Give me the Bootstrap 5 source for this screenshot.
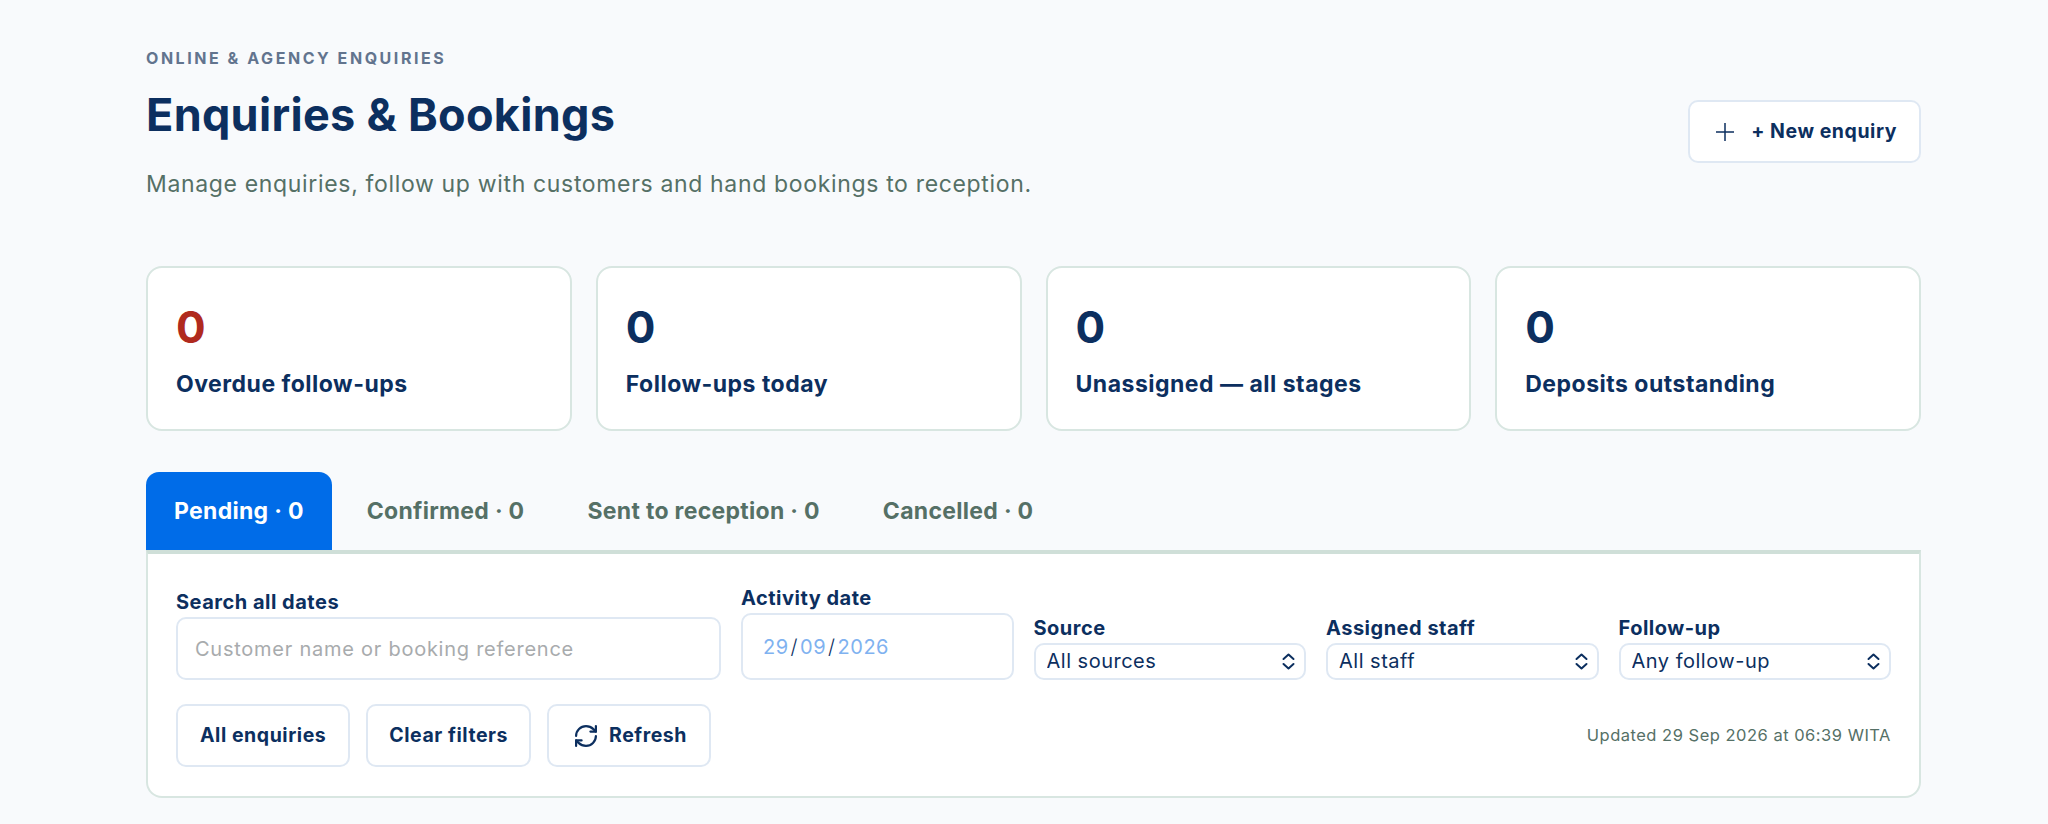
<!doctype html>
<html lang="en">
<head>
<meta charset="utf-8">
<title>Enquiries &amp; Bookings</title>
<link href="https://cdn.jsdelivr.net/npm/bootstrap@5.3.0/dist/css/bootstrap.min.css" rel="stylesheet">
<style>
body{background:#f8fafc;font-family:Inter,"Liberation Sans",sans-serif;color:#0c2f5f}
.shell{padding:47px 127px 27px 146px}
.eyebrow{font-size:16px;font-weight:700;letter-spacing:2.55px;color:#62748e;line-height:22px;margin-bottom:18px}
.page-title{font-size:45px;font-weight:700;line-height:56px;color:#0c2f5f;margin:0 0 25px;letter-spacing:.3px}
.page-sub{font-size:23px;color:#557066;line-height:32px;margin:0;letter-spacing:.66px}
.head-row{margin-bottom:66px}
.btn-soft{background:#fff;border:2px solid #dfe8f3;border-radius:10px;color:#0c2f5f;font-weight:700;font-size:19.5px;height:63px;display:inline-flex;align-items:center;padding:0 22px;letter-spacing:.55px}
.btn-soft:hover{background:#fff;color:#0c2f5f;border-color:#dfe8f3}
.btn-new{margin-top:53px;padding:0 22px 0 26px;gap:17px}
.btn-clear{padding:0 21px}
.btn-refresh{padding:0 22px 0 26px;gap:12px}
.stat{border:2px solid #d8e6e1;border-radius:16px;background:#fff;height:165px;padding:26px 28px}
.stat-num{font-size:44px;font-weight:700;line-height:66px;color:#0c2f5f}
.stat-num.alert-num{color:#b02a1e}
.stat-lab{font-size:23px;font-weight:700;line-height:32px;margin-top:8px;letter-spacing:.5px}
.tabbar{margin-top:41px;gap:7px}
.tabbar .nav-link{font-size:23px;font-weight:700;height:78px;padding:0 28px;display:flex;align-items:center;color:#557066;border-radius:13px 13px 0 0;letter-spacing:.3px}
.tabbar .nav-link.active{background:#006ce8;color:#fff}
.panel{background:#fff;border:2px solid #d8e6e1;border-top:4px solid #cfdfd8;border-radius:0 0 16px 16px;padding:31px 28px 29px}
.filters{display:grid;grid-template-columns:2fr 1fr 1fr 1fr 1fr;column-gap:20px;align-items:end}
.f-lab{font-size:20px;font-weight:700;line-height:26px;margin:0 0 2px;display:block;letter-spacing:.5px}
.fc{border:2px solid #dfe8f3;border-radius:10px;color:#0c2f5f;font-size:20px;letter-spacing:.5px}
.fc::placeholder{color:#a8abad;letter-spacing:.75px}
.fc-search{height:63px;padding:0 17px}
.fc-date{height:67px;padding:0 20px;display:flex;align-items:center}
.fc-date i{font-style:normal;color:#7fb2f0}
.fc-date b{font-weight:300;margin:0 2px;color:#0c2f5f}
.fc-sel{height:37px;padding:0 34px 0 11px;font-size:20px;line-height:33px;background-position:right 9px center;background-size:13px 19px;background-image:url("data:image/svg+xml,%3Csvg xmlns='http://www.w3.org/2000/svg' viewBox='0 0 13 19'%3E%3Cpath d='M1.5 7L6.5 2.5L11.5 7M1.5 12L6.5 16.5L11.5 12' fill='none' stroke='%230c2f5f' stroke-width='2' stroke-linecap='round' stroke-linejoin='round'/%3E%3C/svg%3E")}
.actions{margin-top:24px}
.updated{font-size:16.5px;color:#557066;letter-spacing:.5px}
</style>
</head>
<body>
<div class="shell">
  <div class="d-flex justify-content-between align-items-start head-row">
    <div>
      <div class="eyebrow text-uppercase">Online &amp; agency enquiries</div>
      <h1 class="page-title">Enquiries &amp; Bookings</h1>
      <p class="page-sub">Manage enquiries, follow up with customers and hand bookings to reception.</p>
    </div>
    <button type="button" class="btn btn-soft btn-new">
      <svg width="18" height="18" viewBox="0 0 18 18" aria-hidden="true"><path d="M9 0v18M0 9h18" stroke="#0c2f5f" stroke-width="1.5" fill="none"/></svg>
      <span>+ New enquiry</span>
    </button>
  </div>

  <div class="row row-cols-4 g-4">
    <div class="col"><div class="stat"><div class="stat-num alert-num">0</div><div class="stat-lab">Overdue follow-ups</div></div></div>
    <div class="col"><div class="stat"><div class="stat-num">0</div><div class="stat-lab">Follow-ups today</div></div></div>
    <div class="col"><div class="stat"><div class="stat-num">0</div><div class="stat-lab">Unassigned — all stages</div></div></div>
    <div class="col"><div class="stat"><div class="stat-num">0</div><div class="stat-lab">Deposits outstanding</div></div></div>
  </div>

  <ul class="nav tabbar">
    <li class="nav-item"><a class="nav-link active" href="#">Pending · 0</a></li>
    <li class="nav-item"><a class="nav-link" href="#">Confirmed · 0</a></li>
    <li class="nav-item"><a class="nav-link" href="#">Sent to reception · 0</a></li>
    <li class="nav-item"><a class="nav-link" href="#">Cancelled · 0</a></li>
  </ul>

  <div class="panel">
    <div class="filters">
      <div><label class="f-lab" for="q">Search all dates</label><input id="q" class="form-control fc fc-search" placeholder="Customer name or booking reference"></div>
      <div><label class="f-lab">Activity date</label><div class="form-control fc fc-date"><i>29</i><b>/</b><i>09</i><b>/</b><i>2026</i></div></div>
      <div><label class="f-lab" for="s1">Source</label><select id="s1" class="form-select fc fc-sel"><option>All sources</option></select></div>
      <div><label class="f-lab" for="s2">Assigned staff</label><select id="s2" class="form-select fc fc-sel"><option>All staff</option></select></div>
      <div><label class="f-lab" for="s3">Follow-up</label><select id="s3" class="form-select fc fc-sel"><option>Any follow-up</option></select></div>
    </div>
    <div class="d-flex justify-content-between align-items-center actions">
      <div class="d-flex gap-3">
        <button type="button" class="btn btn-soft">All enquiries</button>
        <button type="button" class="btn btn-soft btn-clear">Clear filters</button>
        <button type="button" class="btn btn-soft btn-refresh">
          <svg width="22" height="22" viewBox="2 2 20 20" fill="none" stroke="#0c2f5f" stroke-width="2" stroke-linecap="round" stroke-linejoin="round" aria-hidden="true"><path d="M3 12a9 9 0 0 1 9-9 9.75 9.75 0 0 1 6.74 2.74L21 8"/><path d="M21 3v5h-5"/><path d="M21 12a9 9 0 0 1-9 9 9.75 9.75 0 0 1-6.74-2.74L3 16"/><path d="M8 16H3v5"/></svg>
          <span>Refresh</span>
        </button>
      </div>
      <div class="updated">Updated 29 Sep 2026 at 06:39 WITA</div>
    </div>
  </div>
</div>
<script src="https://cdn.jsdelivr.net/npm/bootstrap@5.3.0/dist/js/bootstrap.bundle.min.js"></script>
</body>
</html>
